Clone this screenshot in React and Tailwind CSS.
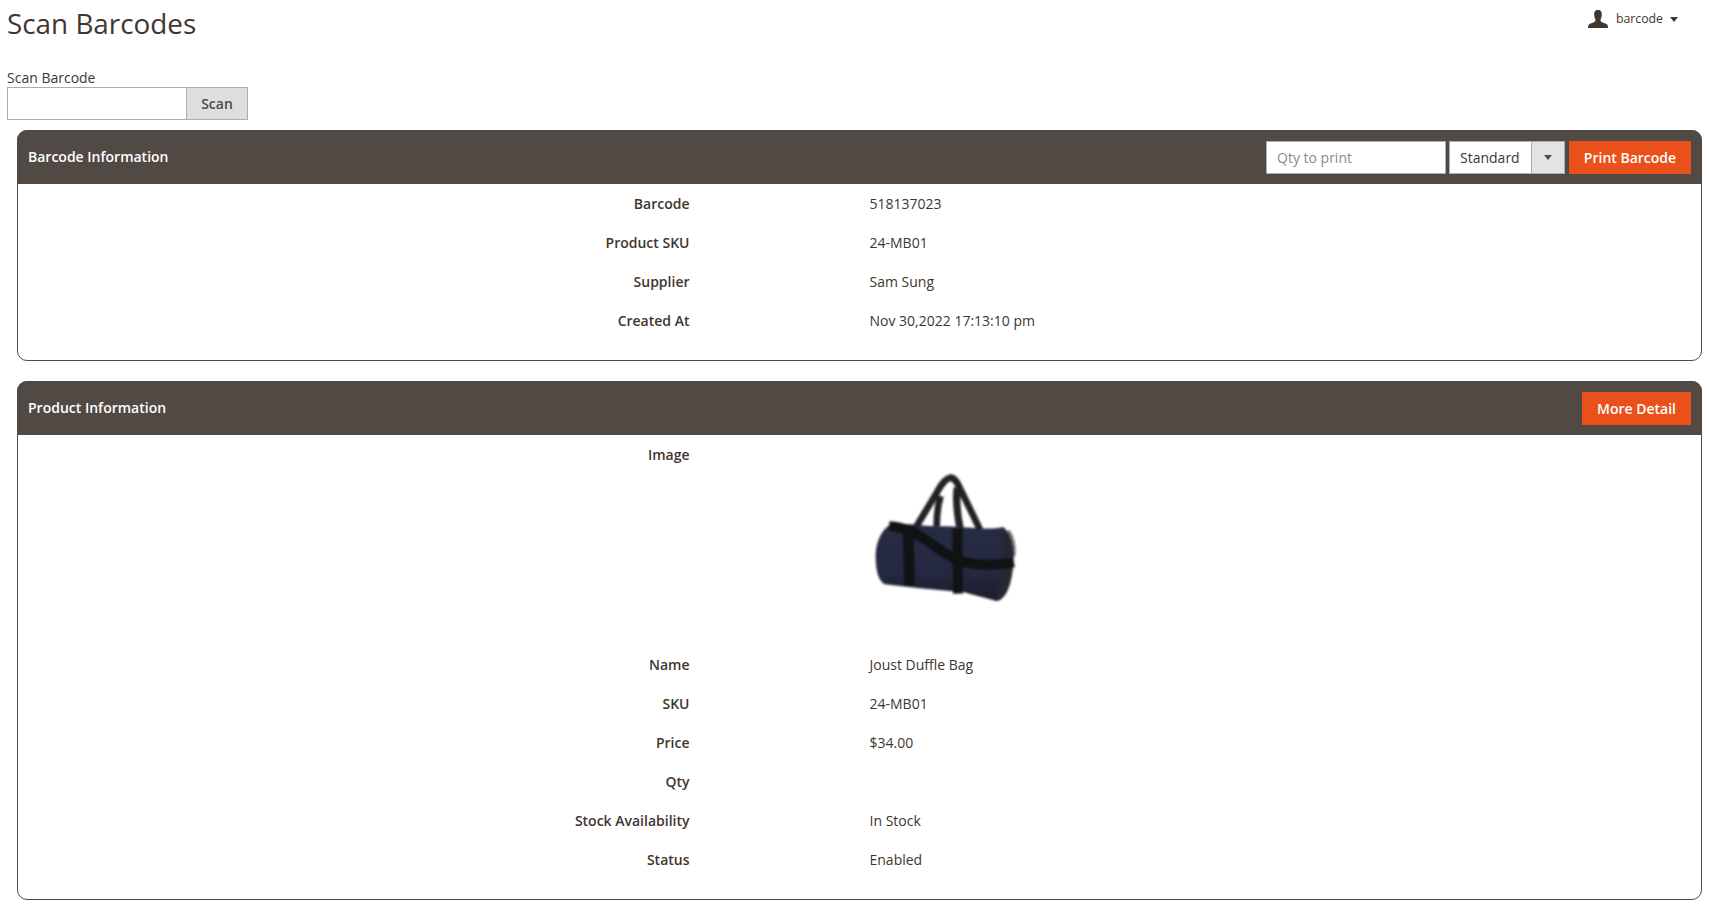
const rowsBarcode = [
  ['Barcode', '518137023'],
  ['Product SKU', '24-MB01'],
  ['Supplier', 'Sam Sung'],
  ['Created At', 'Nov 30,2022 17:13:10 pm'],
];

const rowsProduct = [
  ['Name', 'Joust Duffle Bag'],
  ['SKU', '24-MB01'],
  ['Price', '$34.00'],
  ['Qty', ''],
  ['Stock Availability', 'In Stock'],
  ['Status', 'Enabled'],
];

const Row = ({ label, value }) => (
  <div className="flex h-[39px] items-center">
    <div className="w-[671.5px] text-right font-semibold">{label}</div>
    <div className="ml-[180px]">{value}</div>
  </div>
);

const OrangeButton = ({ children, className }) => (
  <button className={`h-[33px] bg-[#e9501a] text-[14px] font-semibold text-white ${className}`}>
    {children}
  </button>
);

const Panel = ({ title, actions, children, className }) => (
  <section className={`ml-[10px] rounded-[10px] border border-[#514943] ${className}`}>
    <header className="-mx-px -mt-px flex h-[54px] items-center justify-between rounded-t-[10px] bg-[#514943] pl-[11px] pr-[11px]">
      <h2 className="-mt-[1px] text-[14px] font-semibold text-white">{title}</h2>
      <div className="flex items-center">{actions}</div>
    </header>
    {children}
  </section>
);

const DuffleBag = () => (
  <svg width="150" height="150" viewBox="90 45 450 450" className="blur-[0.8px]">
    <defs>
      <linearGradient id="bagBody" x1="0" y1="0" x2="0" y2="1">
        <stop offset="0" stopColor="#272c45" />
        <stop offset="0.65" stopColor="#242840" />
        <stop offset="1" stopColor="#1a1d2a" />
      </linearGradient>
    </defs>
    <path d="M290 226 C290 190 294 160 302 135" fill="none" stroke="#212223" strokeWidth="20" />
    <path d="M352 110 C346 150 352 190 360 232" fill="none" stroke="#212223" strokeWidth="22" />
    <path
      d="M145 224 C118 245 105 285 107 325 C108 360 116 392 135 400 L240 412 L372 424 L470 450 C500 446 518 395 520 325 C522 285 510 245 490 228 C440 240 380 226 300 226 C240 226 190 212 145 224 Z"
      fill="url(#bagBody)"
    />
    <path d="M470 450 C478 400 484 350 490 230 C512 250 522 285 520 325 C518 395 498 446 470 450 Z" fill="#262830" />
    <path d="M226 232 L292 122 C304 100 318 82 332 80 C345 82 352 94 360 112 L420 236" fill="none" stroke="#212223" strokeWidth="20" strokeLinejoin="round" />
    <path d="M148 226 C205 226 250 262 300 296 C350 336 420 352 522 334" fill="none" stroke="#111214" strokeWidth="30" />
    <path d="M205 245 L208 404" fill="none" stroke="#111214" strokeWidth="32" />
    <path d="M352 232 L354 428" fill="none" stroke="#111214" strokeWidth="30" />
    <path d="M505 240 C518 260 526 290 520 316" fill="none" stroke="#111214" strokeWidth="10" strokeDasharray="4 3" />
  </svg>
);

export default function App() {
  return (
    <div className="min-h-[914px] bg-white px-[7px] font-['Open_Sans',sans-serif] text-[14px] text-[#41362f]">
      <div className="flex h-[68px] items-start justify-between">
        <h1 className="mt-[3px] text-[27.85px] leading-[40px] font-normal">Scan Barcodes</h1>
        <div className="mt-[10px] mr-[24px] flex items-center">
          <svg width="20" height="18" viewBox="0 0 20 18" fill="#41362f">
            <path d="M10 0C7 0 6 2 6.2 5 6.3 7.5 7.5 9 7.5 10.5 7.5 12 4 13 1.5 14 .5 14.5 0 16 0 18H20C20 16 19.5 14.5 18.5 14 16 13 12.5 12 12.5 10.5 12.5 9 13.7 7.5 13.8 5 14 2 13 0 10 0Z" />
          </svg>
          <span className="ml-[8px] text-[12.3px]">barcode</span>
          <span className="ml-[7px] h-0 w-0 border-x-[4px] border-t-[5px] border-x-transparent border-t-[#41362f]" />
        </div>
      </div>

      <label className="block h-[19px] leading-[19px]">Scan Barcode</label>
      <div className="flex h-[33px]">
        <input className="h-full w-[180px] border border-[#adadad] bg-white px-[10px] outline-none" />
        <button className="h-full w-[61px] border border-l-0 border-[#adadad] bg-[#dedede] font-semibold text-[#514943]">
          Scan
        </button>
      </div>

      <Panel
        title="Barcode Information"
        className="mt-[10px] h-[231px]"
        actions={
          <>
            <input
              placeholder="Qty to print"
              className="h-[33px] w-[180px] border border-[#adadad] bg-white px-[10px] text-[14px] outline-none placeholder:text-[#8a8a8a]"
            />
            <div className="ml-[3px] flex h-[33px] w-[116px] items-center border border-[#adadad] bg-white">
              <span className="flex-1 pl-[10px] text-[#41362f]">Standard</span>
              <span className="flex h-full w-[33px] items-center justify-center border-l border-[#adadad] bg-[#e3e3e3]">
                <span className="h-0 w-0 border-x-[4px] border-t-[5px] border-x-transparent border-t-[#514943]" />
              </span>
            </div>
            <OrangeButton className="ml-[4px] w-[122px]">Print Barcode</OrangeButton>
          </>
        }
      >
        {rowsBarcode.map(([label, value]) => (
          <Row key={label} label={label} value={value} />
        ))}
      </Panel>

      <Panel
        title="Product Information"
        className="mt-[20px] h-[519px]"
        actions={<OrangeButton className="w-[109px]">More Detail</OrangeButton>}
      >
        <div className="flex h-[210px] items-start">
          <div className="mt-[9px] w-[671.5px] text-right font-semibold">Image</div>
          <div className="ml-[180px] pt-[31px]">
            <DuffleBag />
          </div>
        </div>
        {rowsProduct.map(([label, value]) => (
          <Row key={label} label={label} value={value} />
        ))}
      </Panel>
    </div>
  );
}
